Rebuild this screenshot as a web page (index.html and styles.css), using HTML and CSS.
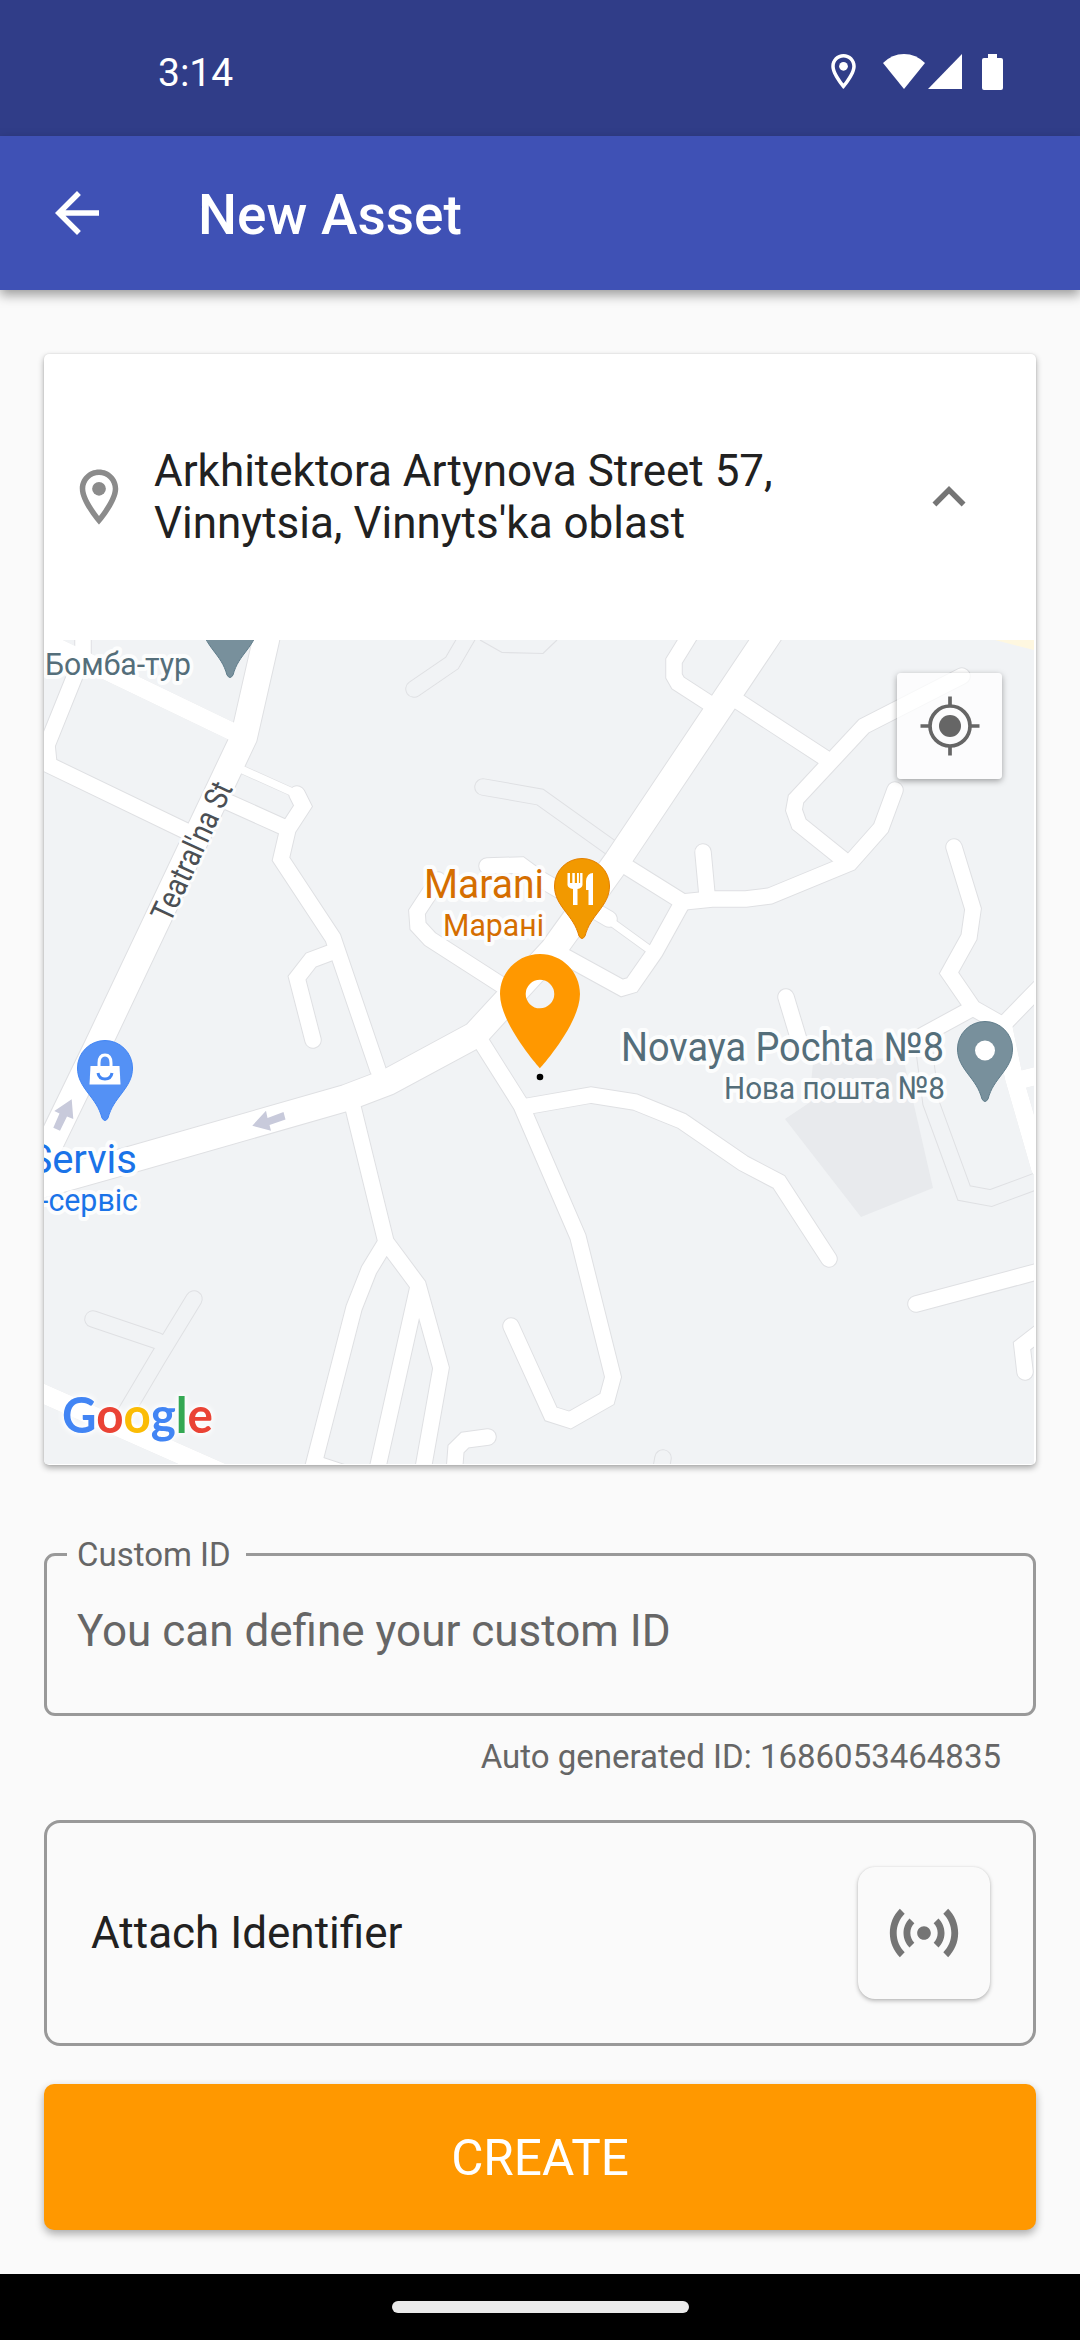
FILE: index.html
```html
<!DOCTYPE html>
<html lang="en">
<head>
<meta charset="utf-8">
<title>New Asset</title>
<link rel="stylesheet" href="styles.css">
</head>
<body>
<div class="screen">
  <header class="status-bar">
    <span class="clock">3:14</span>
    <div class="status-icons">
      <svg class="status-pin" viewBox="5 2 14 20"><path fill="#fff" d="M12 2C8.13 2 5 5.13 5 9c0 5.25 7 13 7 13s7-7.75 7-13c0-3.87-3.13-7-7-7zM7 9c0-2.76 2.24-5 5-5s5 2.24 5 5c0 2.88-2.88 7.19-5 9.88C9.92 16.21 7 11.85 7 9z"/><circle fill="#fff" cx="12" cy="9" r="2.5"/></svg>
      <svg class="status-wifi" viewBox="0 0 42 35"><path fill="#fff" d="M21 35 0 9Q9 0 21 0T42 9Z"/></svg>
      <svg class="status-cell" viewBox="0 0 34 35"><path fill="#fff" d="M34 0V35H0Z"/></svg>
      <svg class="status-battery" viewBox="0 0 21 36"><path fill="#fff" d="M6 0h9v4h4q2 0 2 2v28q0 2-2 2H2q-2 0-2-2V6q0-2 2-2h4z"/></svg>
    </div>
  </header>
  <div class="app-bar">
    <svg class="icon" viewBox="0 0 24 24"><path fill="#fff" d="M20 11H7.83l5.59-5.59L12 4l-8 8 8 8 1.41-1.41L7.83 13H20v-2z"/></svg>
    <h1 class="title">New Asset</h1>
  </div>

  <main class="content">
    <section class="location-card">
      <div class="address-row">
        <svg class="icon" viewBox="0 0 24 24"><path fill="#8b8b8b" d="M12 2C8.13 2 5 5.13 5 9c0 5.25 7 13 7 13s7-7.75 7-13c0-3.87-3.13-7-7-7zM7 9c0-2.76 2.24-5 5-5s5 2.24 5 5c0 2.88-2.88 7.19-5 9.88C9.92 16.21 7 11.85 7 9z"/><circle fill="#8b8b8b" cx="12" cy="9" r="2.5"/></svg>
        <p class="address">Arkhitektora Artynova Street 57, Vinnytsia, Vinnyts'ka oblast</p>
        <svg class="icon" viewBox="0 0 24 24"><path fill="#757575" d="M12 8l-6 6 1.41 1.41L12 10.83l4.59 4.58L18 14z"/></svg>
      </div>
      <div class="map">
        <svg class="map-canvas" viewBox="44 640 990 824">
          <defs>
            <g id="alleys">
              <path d="M470 632 452 663 414 689"/>
              <path d="M483 787 540 797 610 847"/>
              <path d="M925 1050V1057L931 1103 964 1193 991 1198 1037 1181"/>
              <path d="M663 1458 660 1475"/>
              <path d="M194 1299 158 1358 126 1412M93 1319 158 1341"/>
            </g>
            <g id="lanes"><path d="M243 770 292 792M610 921 650 950"/></g>
            <g id="streets">
              <path d="M40 639 231 731" stroke-width="18"/>
              <path d="M83 630V655L74 678 47 745 49 765 190 833"/>
              <path d="M297 794 303 806 288 829 281 859 333 938 378 1070M228 802 288 829"/>
              <path d="M335 951 311 960 297 978 313 1040"/>
              <path d="M487 866 521 865 540 879 609 919"/>
              <path d="M438 880 417 912 418 926 430 939 503 986"/>
              <path d="M690 635 674 661V676L678 683 715 707"/>
              <path d="M730 696 825 758"/>
              <path d="M962 676 864 726 796 799 794 810 799 824 845 861"/>
              <path d="M895 790 881 828 850 863 770 896 746 899H712L683 902 627 867"/>
              <path d="M703 852 707 895"/>
              <path d="M681 905 655 952 632 985 622 988 562 955"/>
              <path d="M954 847 973 909 969 937 949 973 973 1008 1003 1025 1040 987M973 1008 905 1045"/>
              <path d="M1003 1025 1014 1078 1040 1168M1016 1081 1040 1075" stroke-width="18"/>
              <path d="M786 997 799 1040"/>
              <path d="M480 1040 521 1105 540 1149 578 1237 613 1377 607 1399 570 1420 551 1414 511 1326"/>
              <path d="M523 1107 591 1095 635 1102 682 1121 743 1163 779 1182 829 1259"/>
              <path d="M916 1304 1040 1271"/>
              <path d="M1040 1332 1022 1346 1025 1372"/>
              <path d="M352 1103 386 1242 369 1270 354 1308 311 1475M386 1242 418 1285 441 1368 422 1475M418 1287 376 1475"/>
              <path d="M488 1437 465 1440 456 1449 454 1475"/>
              <path d="M317 1464 350 1475"/>
              <path d="M30 1388 220 1472" stroke-width="19"/>
            </g>
            <g id="avenues">
              <path d="M269 625 266 640 244 737 97 1047 30 1185"/>
              <path d="M775 625 765 640 617 861 553 950 475 1035 388 1082 346 1098 140 1157 30 1188"/>
            </g>
            <path id="poi-pin" d="M0-27.5A27.5 27.5 0 0 1 27.5 0C27.5 10 23 17 17 25 11 33 6 39 3 50Q0 55-3 50C-6 39-11 33-17 25-23 17-27.5 10-27.5 0A27.5 27.5 0 0 1 0-27.5Z"/>
          </defs>
          <rect class="land" x="44" y="640" width="990" height="824"/>
          <path fill="#fef7e0" d="M995 640H1034V650Z"/>
          <path fill="#e8eaed" d="M813 1063 903 1057 933 1188 861 1217 785 1119 809 1103Z"/>
          <path fill="none" stroke="#e0e1e4" stroke-width="1.2" d="M480 640 502 652.5 543 653.5 557 640"/>
          <use href="#alleys" class="casing alley-casing"/>
          <use href="#alleys" class="alley"/>
          <g class="casing"><use href="#lanes" stroke-width="9"/></g>
          <use href="#streets" class="outline"/>
          <use href="#avenues" class="casing avenue-casing"/>
          <use href="#lanes" class="lane"/>
          <use href="#streets" class="street"/>
          <use href="#avenues" class="avenue"/>

          <path class="direction" d="M252.300 1125.700 266 1110.700 267.500 1118 283.500 1112 285.500 1119.500 269.500 1125 271 1130.700Z"/>
          <path class="direction" d="M71.700 1099.300 54.300 1111 59.500 1113.500 53.300 1127.700 60 1130.700 67 1116.500 73.300 1119Z"/>

          <g class="label place">
            <text x="45" y="675" textLength="146" lengthAdjust="spacingAndGlyphs">Бомба-тур</text>
            <text x="724" y="1099" textLength="221" lengthAdjust="spacingAndGlyphs">Нова пошта №8</text>
            <text class="big" x="621" y="1061" textLength="323" lengthAdjust="spacingAndGlyphs">Novaya Pochta №8</text>
          </g>
          <text class="label road" x="0" y="0" textLength="150" lengthAdjust="spacingAndGlyphs" transform="translate(170 924) rotate(-65)">Teatral'na St</text>
          <g class="label food">
            <text class="big" x="424" y="898" textLength="120" lengthAdjust="spacingAndGlyphs">Marani</text>
            <text x="443" y="936" textLength="101" lengthAdjust="spacingAndGlyphs">Марані</text>
          </g>
          <g class="label shop">
            <text class="big" x="137" y="1173" text-anchor="end">Servis</text>
            <text x="40" y="1211" textLength="98" lengthAdjust="spacingAndGlyphs">-сервіс</text>
          </g>

          <use href="#poi-pin" class="pin-place" x="230" y="625"/>
          <use href="#poi-pin" class="pin-place" x="985" y="1049"/>
          <circle cx="985" cy="1050.500" r="10" fill="#fff"/>
          <use href="#poi-pin" class="pin-food" x="582" y="886"/>
          <g fill="#fff">
            <path d="M567.500 873H570V883H572.300V873H574.800V883H577V873H582.500V885Q582 888 577.500 889V905H573V889Q568 888 567.500 885Z"/>
            <path d="M593 873V905H588.500V890H586V881Q587 873 593 873Z"/>
          </g>
          <g stroke="#f29900" stroke-width="1.2"><path d="M571.200 872V883M575.800 872V883M579.500 872V883"/></g>
          <use href="#poi-pin" class="pin-shop" x="105" y="1068"/>
          <path fill="#fff" d="M90.500 1066H119.500L120.500 1084.500H89.500Z"/>
          <path fill="none" stroke="#fff" stroke-width="3" d="M99 1067V1063Q99 1055 105 1055T111 1063V1067"/>
          <path fill="none" stroke="#4285f4" stroke-width="3" d="M98 1073Q99 1079 105 1079T112 1073"/>

          <text class="logo" x="62" y="1432.500" textLength="151" lengthAdjust="spacingAndGlyphs"><tspan fill="#4285f4">G</tspan><tspan fill="#ea4335">o</tspan><tspan fill="#fbbc05">o</tspan><tspan fill="#4285f4">g</tspan><tspan fill="#34a853">l</tspan><tspan fill="#ea4335">e</tspan></text>

          <path fill="#ff9800" fill-rule="evenodd" transform="translate(471.430 942.600) scale(5.714)" d="M12 2C8.13 2 5 5.13 5 9c0 5.25 7 13 7 13s7-7.75 7-13c0-3.87-3.13-7-7-7zm0 9.500a2.500 2.500 0 1 1 0-5 2.500 2.500 0 0 1 0 5z"/>
          <circle cx="540" cy="1077" r="3.300"/>
        </svg>
        <button class="locate" aria-label="My location">
          <svg viewBox="-30 -30 60 60"><g fill="none" stroke="#666" stroke-width="3.700"><circle r="20"/><path d="M0-29.500V-20M0 20V29.500M-29.500 0H-20M20 0H29.500"/></g><circle r="11" fill="#666"/></svg>
        </button>
      </div>
    </section>

    <fieldset class="field">
      <legend>Custom ID</legend>
      <div class="placeholder">You can define your custom ID</div>
    </fieldset>
    <p class="helper">Auto generated ID: 1686053464835</p>

    <section class="attach">
      <span>Attach Identifier</span>
      <button class="scan" aria-label="Scan">
        <svg viewBox="0 0 24 24"><path fill="#757575" d="M7.760 16.240C6.670 15.160 6 13.660 6 12s.67-3.160 1.760-4.240l1.420 1.420C8.450 9.900 8 10.900 8 12c0 1.100.45 2.100 1.170 2.830l-1.410 1.410zm8.480 0C17.330 15.160 18 13.660 18 12s-.67-3.160-1.760-4.240l-1.420 1.420C15.550 9.900 16 10.900 16 12c0 1.100-.45 2.100-1.170 2.830l1.410 1.410zM12 10c-1.100 0-2 .9-2 2s.9 2 2 2 2-.9 2-2-.9-2-2-2zm8 2c0 2.210-.9 4.210-2.350 5.650l1.420 1.420C20.880 17.260 22 14.760 22 12s-1.120-5.260-2.930-7.070l-1.420 1.420C19.100 7.790 20 9.790 20 12zM6.350 6.350L4.930 4.930C3.120 6.740 2 9.240 2 12s1.120 5.260 2.930 7.070l1.420-1.420C4.900 16.210 4 14.210 4 12s.9-4.210 2.350-5.650z"/></svg>
      </button>
    </section>
    <button class="create">CREATE</button>
  </main>
  <footer class="nav-bar"><div class="handle"></div></footer>
</div>
</body>
</html>
```
FILE: styles.css
```css
* { box-sizing: border-box; }
body { margin: 0; background: #fafafa; font-family: Roboto, sans-serif; color: #212121; }
button { border: 0; padding: 0; font: inherit; }
p, h1 { margin: 0; }
svg { display: block; }

.screen { width: 1080px; height: 2340px; display: flex; flex-direction: column; overflow: hidden; }

.status-bar { flex: none; height: 136px; padding: 7px 77px 0 158px; display: flex; align-items: center; justify-content: space-between; background: #303d88; color: #fff; }
.clock { padding-top: 2px; font-size: 39px; }
.status-icons { display: flex; align-items: center; }
.status-pin { width: 25px; height: 35px; margin-right: 27px; }
.status-wifi { width: 42px; height: 35px; margin-right: 3px; }
.status-cell { width: 34px; height: 35px; margin-right: 20px; }
.status-battery { width: 21px; height: 36px; }

.app-bar { position: relative; flex: none; height: 154px; padding: 0 44px; display: flex; align-items: center; gap: 88px; background: #3f51b5; color: #fff; box-shadow: 0 5px 11px rgba(0,0,0,.38); }
.icon { flex: none; width: 66px; height: 66px; }
.title { padding-top: 3px; font-size: 55px; font-weight: 500; }

.content { flex: 1; display: flex; flex-direction: column; padding: 64px 44px 0; }

.location-card { flex: none; height: 1111px; border-radius: 5px; background: #fff; box-shadow: 0 3px 6px rgba(0,0,0,.32), 0 0 2px rgba(0,0,0,.12); overflow: hidden; }
.address-row { height: 286px; padding: 0 54px 0 22px; display: flex; align-items: center; gap: 22px; }
.address { flex: none; width: 740px; font-size: 44px; }
.map { position: relative; width: 990px; height: 824px; }
.map-canvas { width: 990px; height: 824px; }
.locate { position: absolute; right: 32px; top: 33px; width: 105px; height: 106px; border-radius: 4px; display: grid; place-items: center; background: rgba(255,255,255,.75); box-shadow: 0 2px 6px rgba(0,0,0,.35); }
.locate svg { width: 60px; height: 60px; }

.land { fill: #f1f3f5; }
.casing, .outline, .alley, .lane, .street, .avenue { fill: none; stroke-linecap: round; stroke-linejoin: miter; }
.casing { stroke: #dfe0e3; }
.alley-casing { stroke-width: 17.5px; }
.alley { stroke: #f1f3f5; stroke-width: 15.5px; }
.lane { stroke: #fff; stroke-width: 7.5px; }
.outline { stroke: #dfe0e3; stroke-width: 17.5px; }
.street { stroke: #fff; stroke-width: 15.5px; }
.avenue-casing { stroke-width: 28px; }
.avenue { stroke: #fff; stroke-width: 26px; }
.direction { fill: #c8cadb; }

.label { font-size: 32px; paint-order: stroke; stroke: #fff; stroke-opacity: .85; stroke-width: 8px; stroke-linejoin: round; }
.label .big { font-size: 40px; }
.place { fill: #546e7a; }
.road { fill: #4b4f54; stroke-width: 6px; }
.food { fill: #d56e00; }
.shop { fill: #1a73e8; }
.pin-place { fill: #78909c; stroke: #607d8b; }
.pin-food { fill: #f29900; stroke: #e37f00; }
.pin-shop { fill: #5491f5; stroke: #4285f4; }
.logo { font-family: Lato, sans-serif; font-size: 50px; font-weight: 700; filter: drop-shadow(0 0 3px #fff) drop-shadow(0 0 2px #fff); }

.field { flex: none; height: 181px; margin: 70px 0 0; padding: 0 31px 0 20px; border: 3px solid #999; border-radius: 11px; min-width: 0; }
.field legend { padding: 0 15px 0 10px; font-size: 33px; line-height: 39px; color: #666; }
.placeholder { padding-left: 10px; margin-top: 31px; font-size: 44px; line-height: 52px; color: #666; }
.helper { margin-top: 21px; padding-right: 35px; text-align: right; font-size: 33px; line-height: 39px; color: #666; }

.attach { flex: none; height: 226px; margin-top: 44px; padding: 0 43px 0 44px; border: 3px solid #999; border-radius: 16px; display: flex; align-items: center; justify-content: space-between; font-size: 44px; }
.scan { width: 132px; height: 132px; border-radius: 17px; display: grid; place-items: center; background: #fafafa; box-shadow: 0 2px 4px rgba(0,0,0,.25), 0 0 2px rgba(0,0,0,.1); }
.scan svg { width: 82px; height: 82px; }

.create { flex: none; height: 146px; margin-top: 38px; padding-top: 1px; border-radius: 10px; background: #ff9800; color: #fff; font-size: 49.5px; box-shadow: 0 4px 8px rgba(0,0,0,.32); }

.nav-bar { flex: none; height: 66px; display: grid; place-items: center; background: #000; }
.handle { width: 297px; height: 12px; border-radius: 6px; background: #eaeaea; }
```
